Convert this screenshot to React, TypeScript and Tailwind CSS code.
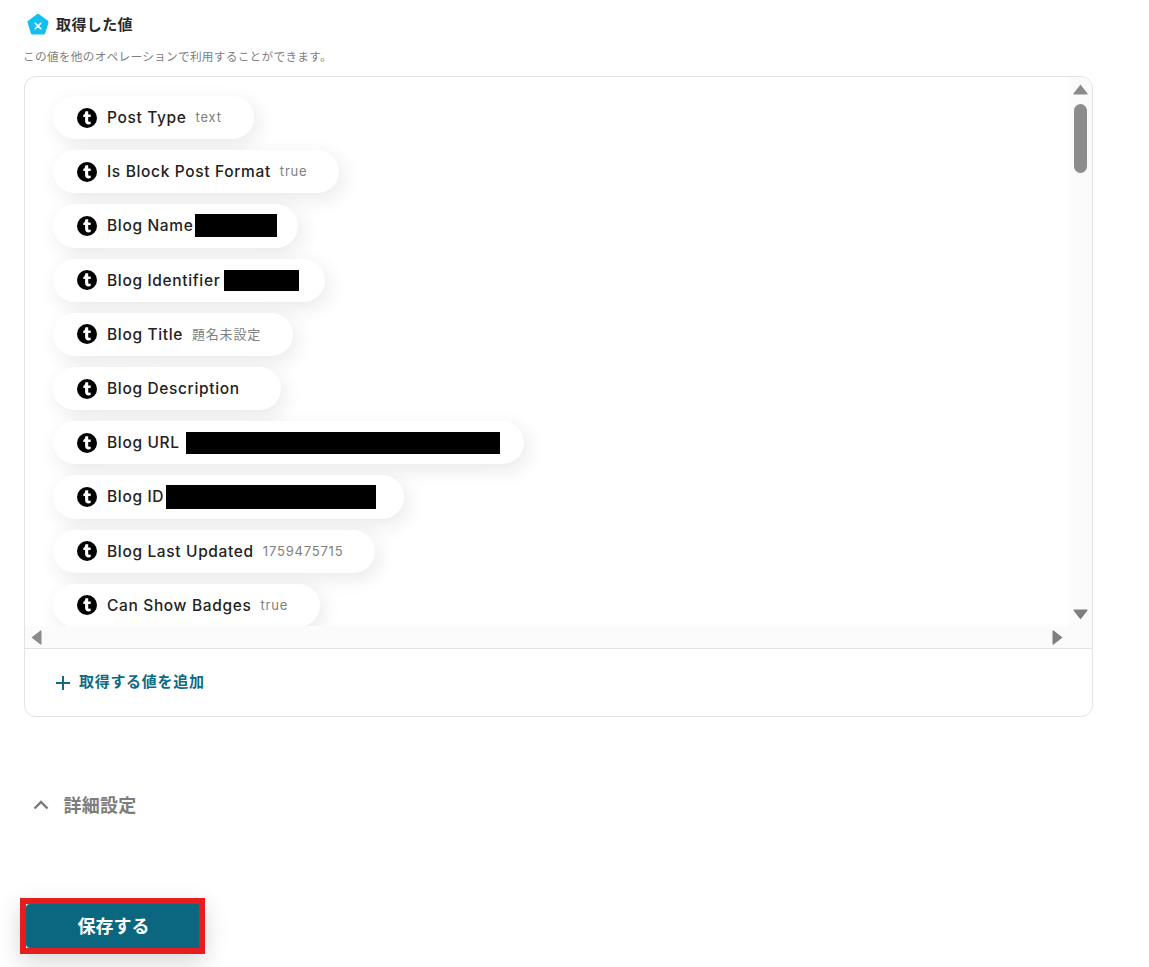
import React from "react";

const JP = "font-['Inter','Noto_Sans_CJK_JP',sans-serif]";

function TumblrIcon() {
  return (
    <svg width="20" height="20" viewBox="0 0 20 20" className="shrink-0">
      <circle cx="10" cy="10" r="10" fill="#000" />
      <path
        d="M8.400 3.300h2.800v3.100h2.500v2.500h-2.500v3.500c0 1 .5 1.400 1.200 1.400.4 0 .9-.1 1.300-.3v2.400c-.6.3-1.400.5-2.200.5-2.100 0-3.400-1.200-3.400-3.400V8.900H6.300V7c1.200-.4 1.900-1.700 2.100-3.700z"
        fill="#fff"
      />
    </svg>
  );
}

type Row = { label: string; value?: string; box?: string };

const rows: Row[] = [
  { label: "Post Type", value: "text" },
  { label: "Is Block Post Format", value: "true" },
  { label: "Blog Name", box: "ml-[2px] mr-[-11px] w-[82px] h-[23px]" },
  { label: "Blog Identifier", box: "ml-[4px] mr-[-6px] w-[75px] h-[21px]" },
  { label: "Blog Title", value: "題名未設定" },
  { label: "Blog Description" },
  { label: "Blog URL", box: "ml-[6px] mr-[-8px] w-[314px] h-[22px]" },
  { label: "Blog ID", box: "ml-[2px] mr-[-4px] w-[210px] h-[24px]" },
  { label: "Blog Last Updated", value: "1759475715" },
  { label: "Can Show Badges", value: "true" },
];

function Pill({ row }: { row: Row }) {
  return (
    <div className="flex h-[43.2px] w-fit shrink-0 items-center rounded-full bg-white pl-[23.500px] pr-[32px] shadow-[4px_6px_20px_rgba(0,0,0,0.09)]">
      <TumblrIcon />
      <span className="ml-[10.500px] mt-[1px] text-[15.500px] font-medium leading-[20px] tracking-[0.65px] whitespace-nowrap text-[#222222]">
        {row.label}
      </span>
      {row.box ? (
        <span className={`block bg-black ${row.box}`} />
      ) : (
        <span className="mb-[1px] ml-[9px] text-[13px] leading-[20px] tracking-[0.8px] whitespace-nowrap text-[#808080]">
          {row.value ?? ""}
        </span>
      )}
    </div>
  );
}

export default function App() {
  return (
    <div className={`h-[967px] w-[1149px] overflow-hidden bg-white pl-[24px] ${JP}`}>
      <div className="flex h-[48px] items-center pt-[2px]">
        <svg width="24" height="24" viewBox="0 0 24 24" className="ml-[1.500px] shrink-0">
          <path
            d="M10.600 1.400c.8-.6 2-.6 2.800 0l8.200 6.100c.8.600 1.100 1.600.8 2.500l-3.100 9.900c-.3.900-1.200 1.600-2.200 1.600H7c-1 0-1.900-.7-2.200-1.600L1.700 10c-.3-.9 0-1.900.8-2.500z"
            fill="#12bfef"
          />
          <path d="M9.200 10.200 14.800 15.800M14.800 10.200 9.200 15.800" stroke="#fff" strokeWidth="1.600" strokeLinecap="round" />
        </svg>
        <span className="ml-[6.500px] text-[15px] font-semibold tracking-[0.4px] text-[#2a2a2a]">取得した値</span>
      </div>
      <p className="ml-[-1px] text-[11.700px] leading-[18px] tracking-[0.25px] text-[#808080]">
        この値を他のオペレーションで利用することができます。
      </p>
      <div className="mt-[10px] flex h-[641px] w-[1069px] flex-col rounded-[12px] border border-[#e3e3e3] bg-white">
        <div className="flex h-[549px] shrink-0 overflow-hidden rounded-tr-[12px]">
          <div className="flex min-w-0 flex-1 flex-col gap-[11px] overflow-hidden rounded-tl-[12px] pl-[28px] pt-[19px]">
            {rows.map((r) => (
              <Pill key={r.label} row={r} />
            ))}
          </div>
          <div className="flex w-[23px] shrink-0 flex-col items-center bg-[#fbfbfb] pr-[1px]">
            <svg width="15" height="11" viewBox="0 0 15 11" className="mt-[7px]">
              <path d="M7.500 .5 14.500 9.500a.6.600 0 0 1-.5 1H1a.6.600 0 0 1-.5-1z" fill="#8a8a8a" />
            </svg>
            <div className="mt-[9px] h-[69px] w-[13px] rounded-full bg-[#8c8c8c]" />
            <svg width="15" height="11" viewBox="0 0 15 11" className="mt-auto mb-[6px]">
              <path d="M7.500 10.500 .5 1.500A.6.600 0 0 1 1 .5h13a.6.600 0 0 1 .5 1z" fill="#7f7f7f" />
            </svg>
          </div>
        </div>
        <div className="flex h-[23px] shrink-0 items-center justify-between border-b border-[#e3e3e3] bg-[#fbfbfb] pl-[6px] pr-[29px]">
          <svg width="11" height="15" viewBox="0 0 11 15">
            <path d="M.5 7.500 9.500 .5a.6.600 0 0 1 1 .5v13a.6.600 0 0 1-1 .5z" fill="#8a8a8a" />
          </svg>
          <svg width="11" height="15" viewBox="0 0 11 15">
            <path d="M10.500 7.500 1.500 14.500a.6.600 0 0 1-1-.5V1a.6.600 0 0 1 1-.5z" fill="#7f7f7f" />
          </svg>
        </div>
        <div className="flex flex-1 items-center pl-[30px]">
          <svg width="16" height="16" viewBox="0 0 16 16" className="shrink-0">
            <path d="M8 1v14M1 8h14" stroke="#0d6b85" strokeWidth="2" />
          </svg>
          <span className="ml-[8px] text-[15px] font-semibold tracking-[0.7px] text-[#0d6b85]">取得する値を追加</span>
        </div>
      </div>
      <div className="mt-[73px] flex h-[30px] items-center pl-[9px]">
        <svg width="16" height="10" viewBox="0 0 16 10" className="shrink-0">
          <path d="M1.500 8.500 8 2l6.500 6.500" fill="none" stroke="#7a7a7a" strokeWidth="2.400" />
        </svg>
        <span className="ml-[14.500px] text-[18px] font-semibold tracking-[0.25px] text-[#7d7d7d]">詳細設定</span>
      </div>
      <div className="ml-[-4px] mt-[78px] h-[56px] w-[185px] border-[6px] border-[#e71c1f] bg-white shadow-[0_8px_24px_rgba(0,0,0,0.16)]">
        <button className="flex h-full w-full items-center justify-center rounded-l-[4px] bg-[#0b6780] pl-[2px] text-[18px] font-bold text-white">
          保存する
        </button>
      </div>
    </div>
  );
}
